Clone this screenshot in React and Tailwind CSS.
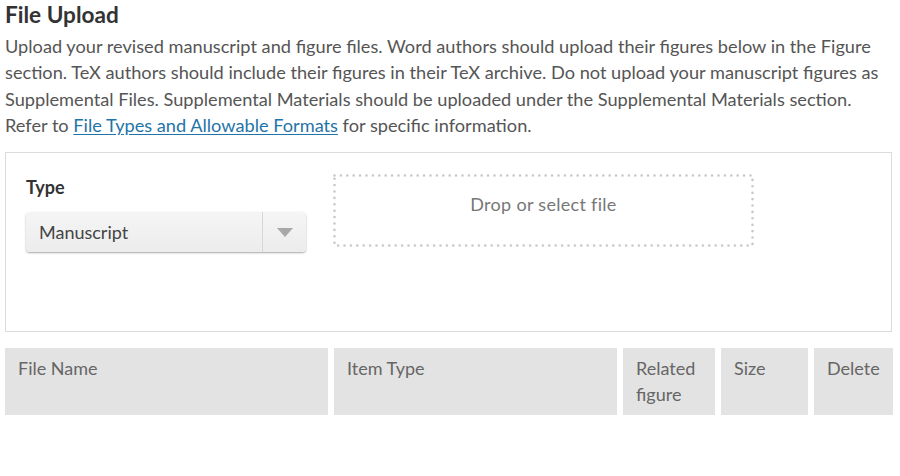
import React from "react";

const cols = [
  { label: "File Name" },
  { label: "Item Type" },
  { label: "Related figure" },
  { label: "Size" },
  { label: "Delete" },
];

export default function App() {
  return (
    <div className="w-[900px] h-[476px] bg-white px-[5px] pt-[1px]" style={{ fontFamily: "Lato, 'Open Sans', sans-serif" }}>
      <h2 className="text-[22.6px] leading-[28px] font-bold text-[#333]">File Upload</h2>
      <p className="text-[18.2px] leading-[26.3px] text-[#555] mt-[4px] whitespace-nowrap">
        Upload your revised manuscript and figure files. Word authors should upload their figures below in the Figure
        <br />
        section. TeX authors should include their figures in their TeX archive. Do not upload your manuscript figures as
        <br />
        Supplemental Files. Supplemental Materials should be uploaded under the Supplemental Materials section.
        <br />
        Refer to{" "}
        <a href="#" className="text-[#1f74a8] underline underline-offset-2">File Types and Allowable Formats</a>{" "}
        for specific information.
      </p>

      <div className="mt-[14px] w-[887px] h-[180px] border border-[#dcdcdc] flex px-[20px] pt-[21px]">
        <div className="w-[280px]">
          <div className="text-[18px] font-bold text-[#333] leading-[26px]">Type</div>
          <div className="mt-[12px] h-[40px] rounded-[4px] bg-gradient-to-b from-[#f5f5f5] to-[#ececec] shadow-[0_1px_2px_rgba(0,0,0,0.35)] flex items-center">
            <span className="flex-1 pl-[13px] text-[18px] text-[#444]">Manuscript</span>
            <span className="w-[44px] h-full border-l border-[#d6d6d6] flex items-center justify-center">
              <svg width="16" height="9" viewBox="0 0 16 9"><path d="M0 0 L16 0 L8 9 Z" fill="#a8a8a8" /></svg>
            </span>
          </div>
        </div>
        {/* dropzone, dotted frame drawn as svg so the dots are spaced like the original */}
        <div className="relative ml-[27px] w-[421px] h-[73px] flex justify-center">
          <svg className="absolute inset-0" width="421" height="73">
            <rect x="1.5" y="1.5" width="418" height="70" fill="none" stroke="#c8c8c8" strokeWidth="2.6" strokeLinecap="round" strokeDasharray="0 6.4" />
          </svg>
          <span className="mt-[17px] text-[18px] text-[#777] tracking-[0.3px]">Drop or select file</span>
        </div>
      </div>

      <div className="mt-[16px] grid grid-cols-[323px_283px_92px_87px_79px] gap-x-[6px] w-[888px]">
        {cols.map((c) => (
          <div key={c.label} className="bg-[#e3e3e3] h-[67px] pl-[13px] pr-2 pt-[7px] text-[18px] leading-[26px] text-[#666]">
            {c.label}
          </div>
        ))}
      </div>
    </div>
  );
}
